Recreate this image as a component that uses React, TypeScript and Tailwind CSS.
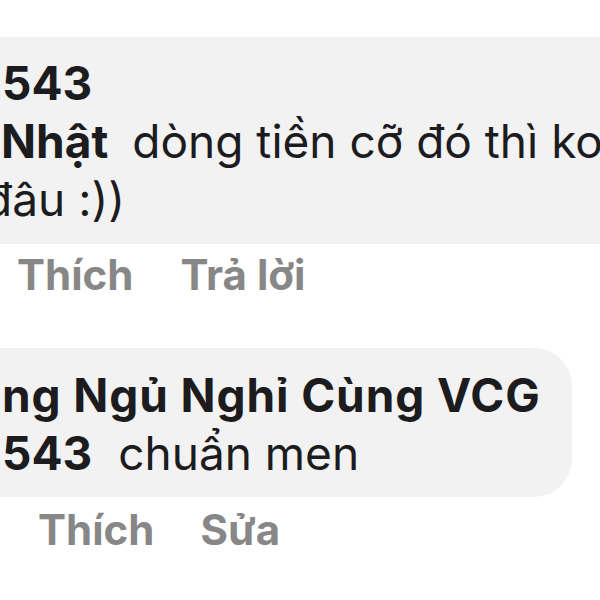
import React from 'react'

export default function App() {
  return (
    <div className="w-[600px] h-[600px] overflow-hidden bg-white font-['Inter','Roboto',sans-serif] text-[#1c1c1e]">
      {/* Comment 1 (cut at left and right) */}
      <div className="pt-[37px]">
        <div className="bg-[#f2f2f3] h-[207px] pt-[17px] pl-[2px] text-[46px] leading-[58px] whitespace-nowrap overflow-hidden">
          <div className="font-bold">543</div>
          <div>
            <span className="font-bold -ml-[1px]">Nhật</span>
            <span className="ml-[24px]">dòng tiền cỡ đó thì ko</span>
          </div>
          <div className="-ml-[18px]">đâu :))</div>
        </div>
      </div>

      {/* Actions 1 */}
      <div className="mt-[6px] h-[50px] flex items-center gap-[47px] pl-[17px] text-[42px] leading-[50px] font-bold text-[#878787]">
        <span>Thích</span>
        <span>Trả lời</span>
      </div>

      {/* Comment 2 */}
      <div className="mt-[48px] mr-[28px] bg-[#f2f2f3] rounded-r-[38px] h-[149px] pt-[18px] pl-[2px] text-[46px] leading-[58px] whitespace-nowrap overflow-hidden">
        <div className="font-bold tracking-[0.9px]">ng Ngủ Nghỉ Cùng VCG</div>
        <div>
          <span className="font-bold">543</span>
          <span className="ml-[26px]">chuẩn men</span>
        </div>
      </div>

      {/* Actions 2 */}
      <div className="mt-[8px] h-[50px] flex items-center gap-[46px] pl-[38px] text-[42px] leading-[50px] font-bold text-[#878787]">
        <span>Thích</span>
        <span>Sửa</span>
      </div>
    </div>
  )
}
